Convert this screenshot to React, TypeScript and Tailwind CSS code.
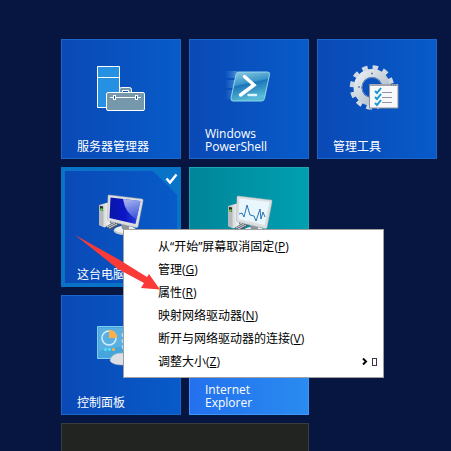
import React from 'react';

const ServerIcon = () => (
  <svg width="64" height="56" viewBox="0 0 64 56" fill="none" stroke="#fff">
    <path d="M8.5 3.5h22v41h-22zM8.5 14.5h22" fill="#2690e3" />
    <path d="M30.5 29.5v-3q0-2 2-2h8q2 0 2 2v3" fill="#7698ad" />
    <path d="M33.5 29v-1.5h6V29" fill="#0a50c0" />
    <rect x="17.5" y="29.5" width="38" height="18" rx="1.5" fill="#7698ad" />
    <path d="M21 34.5h31" />
    <rect x="24.5" y="32.5" width="2" height="4" fill="#0a50c0" />
    <rect x="46.5" y="32.5" width="2" height="4" fill="#0a50c0" />
  </svg>
);

const PowerShellIcon = () => (
  <svg width="64" height="56" viewBox="0 0 64 56" fill="none">
    <defs>
      <linearGradient id="ps" x1="0" y1="0" x2="0.3" y2="1">
        <stop offset="0" stopColor="#8fcde6" />
        <stop offset="0.45" stopColor="#3b96ca" />
        <stop offset="0.5" stopColor="#1c75b9" />
        <stop offset="1" stopColor="#57bdd6" />
      </linearGradient>
      <linearGradient id="trail">
        <stop offset="0" stopColor="#6bb4e8" stopOpacity="0" />
        <stop offset="1" stopColor="#8acbf0" stopOpacity="0.5" />
      </linearGradient>
    </defs>
    <path d="M9 8h11l-2 7H9zM8 17h10l-2 8H8zM8 27h8l-2 9H8z" fill="url(#trail)" />
    <path d="M21 9h29.5q2.5 0 2 2.5l-5 24q-.5 2.500-3 2.500H16q-2.500 0-2-2.500l5-24Q19.500 9 21 9z" fill="url(#ps)" stroke="#95d5e6" />
    <path d="M27.5 13.5L37 22l-13.5 10" stroke="#fff" strokeWidth="3.5" strokeLinecap="round" />
    <path d="M31.5 32h7.500" stroke="#dff3fc" strokeWidth="2.5" strokeLinecap="round" />
  </svg>
);

const ToolsIcon = () => (
  <svg width="64" height="56" viewBox="0 0 64 56" fill="none">
    <defs>
      <linearGradient id="gear" x1="0" y1="0" x2="1" y2="1">
        <stop offset="0" stopColor="#e8edf2" />
        <stop offset="1" stopColor="#a9b6c5" />
      </linearGradient>
    </defs>
    <circle cx="27" cy="24.5" r="14.5" stroke="url(#gear)" strokeWidth="8" />
    <circle cx="27" cy="24.5" r="20" stroke="#d0d8e2" strokeWidth="4.5" strokeDasharray="5.500 4.972" />
    <circle cx="27" cy="24.5" r="10" stroke="#6e8db5" />
    <circle cx="27" cy="10.5" r="1" fill="#71839a" />
    <circle cx="14" cy="24" r="1" fill="#71839a" />
    <path d="M24.5 21.5h28.500v23.500h-28.500z" fill="#f8f8fb" stroke="#8a909b" />
    <path d="M25 22h28" stroke="#a0a5ae" strokeWidth="2" />
    <path d="M46 22h5" stroke="#5e6670" strokeDasharray="1 1" />
    <path d="M30 28l2 2 4-5M30 34l2 2 4-5M30 40l2 2 4-5" stroke="#159ad0" strokeWidth="2" />
    <path d="M37 29.5h10M37 34.5h10M37 39.5h10" stroke="#9290ac" />
  </svg>
);

const ComputerIcon = ({ monitor = false }: { monitor?: boolean }) => (
  <svg width="64" height="56" viewBox={monitor ? '-1 -1 64 56' : '0 0 64 56'} fill="none">
    <defs>
      <linearGradient id="screen">
        <stop offset="0" stopColor="#0a16a8" />
        <stop offset="0.5" stopColor="#0b16c4" />
        <stop offset="1" stopColor="#2e49dc" />
      </linearGradient>
      <linearGradient id="shine" x1="0" y1="0" x2="0.4" y2="1">
        <stop offset="0" stopColor="#dbe3fc" />
        <stop offset="1" stopColor="#4a66e0" />
      </linearGradient>
      <linearGradient id="tower">
        <stop offset="0" stopColor="#c4c6c8" />
        <stop offset="1" stopColor="#f4f4f4" />
      </linearGradient>
    </defs>
    <path d="M16 35l8-5 7 3-9 6z" fill="#4d5666" />
    <path d="M16 35l8-4M18 36l8-4M20 37l8-4" stroke="#dfe2e4" />
    <path d="M10 14l9-2.5 2 1V33l-5.500 3.500L10 34z" fill="url(#tower)" />
    <path d="M10 14l4.500 1v21L10 34z" fill="#b7babc" />
    <path d="M11 15l3 .5v4.500l-3-1z" fill="#252b2b" />
    <circle cx="12.5" cy="18.5" r="1.3" fill="#5be12b" />
    <ellipse cx="36" cy="39.5" rx="11.5" ry="4.5" fill="#c8cbce" />
    <ellipse cx="36" cy="38.5" rx="10" ry="3.5" fill="#edeeef" />
    <path d="M32 31l8 2v6l-7-1z" fill="#8f9397" />
    <path d="M20 4l33 4q1.500 0 1 2L49 35.500q-.5 1.500-2 1L19.500 30q-1-.5-1-1.500L19 5q0-1 1-1z" fill="#dcdedf" stroke="#aeb2b5" strokeWidth="0.5" />
    <path d="M21.5 6.500L51.500 10 46.500 33 20.500 27z" fill={monitor ? '#eaf6fd' : 'url(#screen)'} />
    {monitor ? (
      <path d="M21 22l3-1 2 4 3-12 3 10 4 1 2 5 4-12 1 10 2-7 2 5" stroke="#2775b4" />
    ) : (
      <path d="M34 8L51.500 10 47.500 28Q36 22 34 8z" fill="url(#shine)" fillOpacity="0.8" />
    )}
  </svg>
);

const ControlPanelIcon = () => (
  <svg width="64" height="56" viewBox="0 0 64 56" fill="none">
    <path d="M8.5 7.500h47v32h-47z" fill="#48a5dc" stroke="#7dcdf1" />
    <path d="M10 9h44v14L10 32z" fill="#6cbbe7" fillOpacity="0.5" />
    <circle cx="20" cy="19" r="7" stroke="#d3eefb" strokeWidth="1.5" />
    <path d="M20 19v-8q8 0 8 8z" fill="#fbb04c" />
    <circle cx="16.5" cy="30.5" r="1.5" fill="#4de5fa" />
    <circle cx="20.5" cy="30.5" r="1.5" fill="#4de5fa" />
    <circle cx="24.5" cy="30.5" r="1.5" fill="#ffb23b" />
    <path d="M35 14a2 2 0 100 4 2 2 0 000-4M35 20a2 2 0 100 4 2 2 0 000-4M35 26a2 2 0 100 4 2 2 0 000-4" stroke="#d3eefb" />
    <path d="M21 42q1-8 12-8t12 8q-3 4-12 4t-12-4z" fill="#dcdfe4" stroke="#aab4c2" strokeWidth="0.5" />
  </svg>
);

const blue = 'bg-linear-to-r from-[#0a49b6] to-[#075bc9] border border-[#1c66cb]';

const tiles = [
  { title: ['服务器管理器'], icon: <ServerIcon />, style: blue },
  { title: ['Windows', 'PowerShell'], icon: <PowerShellIcon />, style: blue },
  { title: ['管理工具'], icon: <ToolsIcon />, style: blue },
  { title: ['这台电脑'], icon: <ComputerIcon />, style: blue, selected: true },
  {
    title: [],
    icon: <ComputerIcon monitor />,
    style: 'col-span-2 w-[120px] bg-linear-to-r from-[#008599] to-[#00a0b1] border border-[#1ca5b4]'
  },
  { title: ['控制面板'], icon: <ControlPanelIcon />, style: blue },
  {
    title: ['Internet', 'Explorer'],
    style: 'col-span-2 w-[120px] bg-linear-to-r from-[#2470ee] to-[#2a8bf0] border border-[#3f96f6]'
  }
];

const menuItems = [
  { label: '从“开始”屏幕取消固定', hotkey: 'P' },
  { label: '管理', hotkey: 'G' },
  { label: '属性', hotkey: 'R' },
  { label: '映射网络驱动器', hotkey: 'N' },
  { label: '断开与网络驱动器的连接', hotkey: 'V' },
  { label: '调整大小', hotkey: 'Z', submenu: true }
];

const App = () => {
  return (
    <main
      lang="zh-CN"
      className="relative h-screen overflow-hidden bg-[#071640] pl-[61px] pt-[39px] font-['Open_Sans','Noto_Sans_CJK_SC',sans-serif] text-xs"
    >
      <div className="grid grid-cols-[120px_120px_120px] auto-rows-[120px] gap-2">
        {tiles.map((tile, index) => (
          <button
            key={index}
            className={`relative flex flex-col items-center text-left text-white ${tile.style}`}
          >
            <span className="h-14 mt-[23px]">{tile.icon}</span>
            <span className="mt-auto mb-[5px] w-full pl-[15px] leading-[13px]">
              {tile.title.map((line) => (
                <span key={line} className="block">{line}</span>
              ))}
            </span>
            {tile.selected && (
              <span className="absolute -inset-px border-4 border-[#0873c7]">
                <svg className="absolute -top-1 -right-1" width="32" height="32" viewBox="0 0 32 32" fill="none">
                  <path d="M0 0h32v32z" fill="#0873c7" />
                  <path d="M17.5 11.500l3.500 4 6.500-8" stroke="#fff" strokeWidth="2.5" />
                </svg>
              </span>
            )}
          </button>
        ))}
        <button aria-label="桌面" className="col-span-2 bg-[#222421] border border-[#3a3c3b]" />
      </div>

      <div
        role="menu"
        className="absolute left-[123px] top-[229px] w-[261px] border border-[#a0a0a0] bg-white pt-[5px] pb-1 text-black"
      >
        {menuItems.map((item) => (
          <button
            key={item.hotkey}
            role="menuitem"
            className="flex h-[23px] w-full items-center justify-between pl-[34px] pr-1.5 leading-4"
          >
            <span>
              {item.label}(<span className="underline">{item.hotkey}</span>)
            </span>
            {item.submenu && (
              <span className="flex items-center gap-1">
                <svg width="6" height="7" viewBox="0 0 6 7" fill="none">
                  <path d="M1 .5l3 3-3 3" stroke="#000" strokeWidth="2" />
                </svg>
                <span className="h-2 w-[5px] border border-[#413046]" />
              </span>
            )}
          </button>
        ))}
      </div>

      <svg className="absolute left-[74px] top-[233px]" width="88" height="60" viewBox="74 233 88 60">
        <path d="M75 235L118 259L147 277L149 274L160 289.500L141 288L144 283L118 269z" fill="#f93a37" />
      </svg>
    </main>
  );
};

export default App;
